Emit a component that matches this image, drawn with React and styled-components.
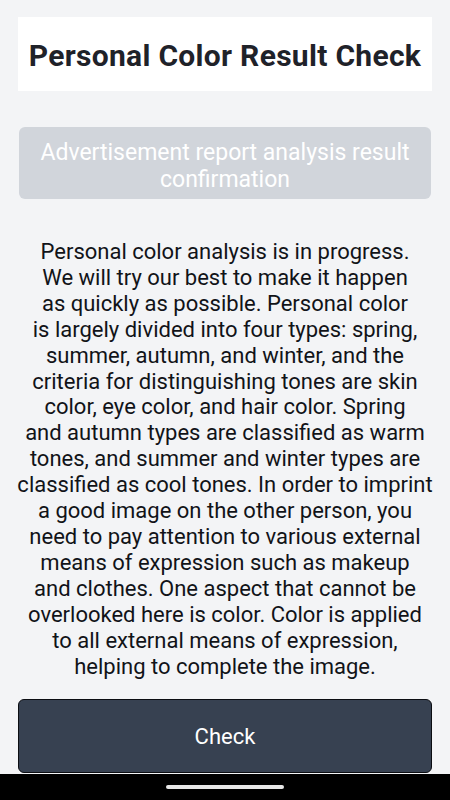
import React from 'react';
import styled, { createGlobalStyle } from 'styled-components';

const GlobalStyle = createGlobalStyle`
  * {
    box-sizing: border-box;
  }
  html, body {
    margin: 0;
    padding: 0;
    background: #f3f4f6;
    font-family: Roboto, "Noto Sans", sans-serif;
  }
`;

const Page = styled.div`
  min-height: 800px;
  padding: 17px 18px 27px;
  display: flex;
  flex-direction: column;
  background: #f3f4f6;
`;

const Header = styled.div`
  height: 74px;
  background: #ffffff;
  display: flex;
  align-items: center;
  justify-content: center;

  h1 {
    margin: 0;
    font-size: 30px;
    font-weight: 700;
    letter-spacing: 0.3px;
    color: #1f2229;
    padding-top: 2px;
  }
`;

const AdButton = styled.button`
  margin: 36px 1px 0;
  height: 72px;
  border: none;
  border-radius: 6px;
  background: #d1d5db;
  color: #ffffff;
  font-family: inherit;
  font-size: 23px;
  line-height: 27px;
  padding: 5px 10px 0;
`;

const Description = styled.p`
  margin: 40px -6px 0;
  font-size: 22px;
  line-height: 25.9px;
  color: #111318;
  text-align: center;
`;

const CheckButton = styled.button`
  margin-top: auto;
  height: 74px;
  border: 1.5px solid #0b0d12;
  border-radius: 6px;
  background: #374151;
  color: #ffffff;
  font-family: inherit;
  font-size: 22px;
  padding-top: 2px;
`;

const NavBar = styled.div`
  position: fixed;
  left: 0;
  right: 0;
  bottom: 0;
  height: 26px;
  background: #000000;
  display: flex;
  align-items: center;
  justify-content: center;

  span {
    width: 118px;
    height: 4px;
    border-radius: 2px;
    background: #e8e8e8;
  }
`;

const lines = [
    'Personal color analysis is in progress.',
    'We will try our best to make it happen',
    'as quickly as possible. Personal color',
    'is largely divided into four types: spring,',
    'summer, autumn, and winter, and the',
    'criteria for distinguishing tones are skin',
    'color, eye color, and hair color. Spring',
    'and autumn types are classified as warm',
    'tones, and summer and winter types are',
    'classified as cool tones. In order to imprint',
    'a good image on the other person, you',
    'need to pay attention to various external',
    'means of expression such as makeup',
    'and clothes. One aspect that cannot be',
    'overlooked here is color. Color is applied',
    'to all external means of expression,',
    'helping to complete the image.',
];

const App = () => {
    return (
        <>
            <GlobalStyle />
            <Page>
                <Header>
                    <h1>Personal Color Result Check</h1>
                </Header>
                <AdButton>Advertisement report analysis result confirmation</AdButton>
                <Description>
                    {lines.map((line, i) => (
                        <React.Fragment key={i}>
                            {line}
                            {i < lines.length - 1 && <br />}
                        </React.Fragment>
                    ))}
                </Description>
                <CheckButton>Check</CheckButton>
            </Page>
            <NavBar>
                <span />
            </NavBar>
        </>
    );
};

export default App;
